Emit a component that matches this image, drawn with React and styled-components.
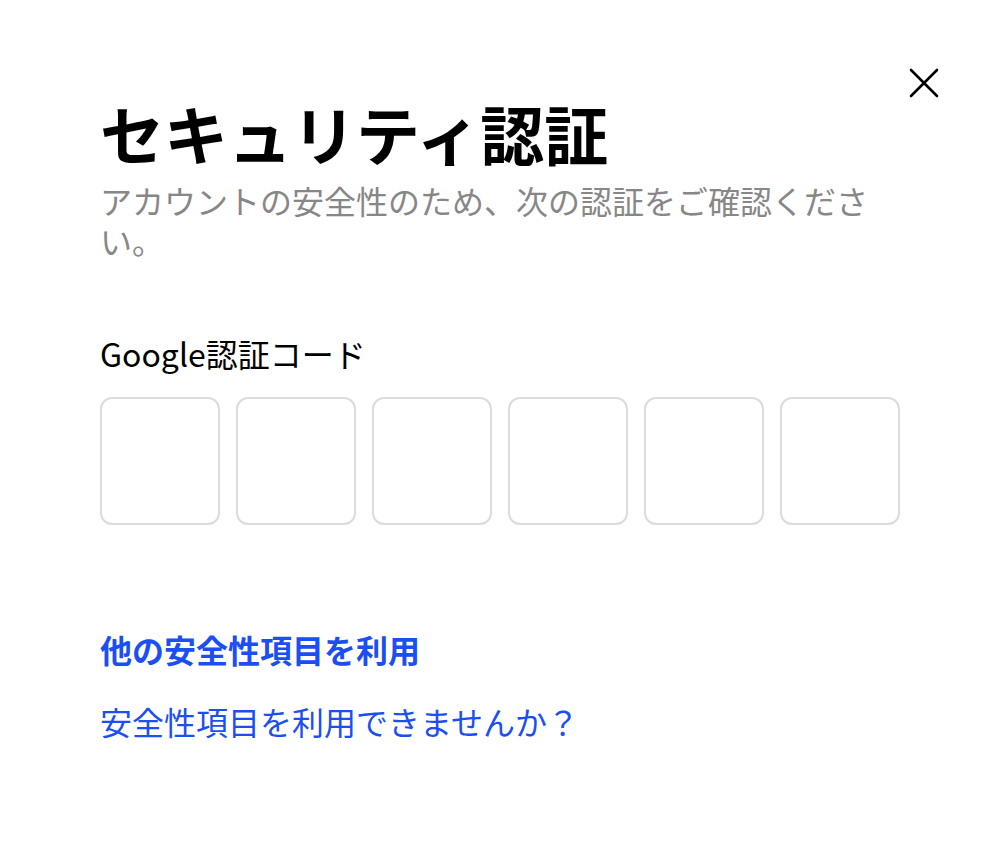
import React from "react";
import styled, { createGlobalStyle } from "styled-components";

const GlobalStyle = createGlobalStyle`
  body {
    margin: 0;
    background: #ffffff;
    font-family: "Noto Sans CJK JP", "Noto Sans", sans-serif;
  }
`;

const Page = styled.div`
  position: relative;
  width: 998px;
  height: 852px;
  box-sizing: border-box;
  padding: 84px 98px 0 100px;
`;

const CloseButton = styled.button`
  position: absolute;
  top: 66px;
  right: 57px;
  width: 34px;
  height: 34px;
  padding: 0;
  border: none;
  background: none;
  display: flex;
  align-items: center;
  justify-content: center;
  cursor: pointer;
`;

const Title = styled.h1`
  margin: 0;
  font-size: 64px;
  line-height: 96px;
  font-weight: 700;
  color: #000;
`;

const Subtitle = styled.p`
  margin: 0;
  font-size: 32px;
  line-height: 40px;
  color: #878787;
  width: 780px;
`;

const Label = styled.div`
  margin-top: 73px;
  font-size: 32px;
  line-height: 40px;
  color: #000;
`;

const CodeRow = styled.div`
  margin-top: 24px;
  display: grid;
  grid-template-columns: repeat(6, 120px);
  gap: 16px;
`;

const CodeBox = styled.input`
  box-sizing: border-box;
  width: 120px;
  height: 128px;
  border: 2px solid #dcdcdc;
  border-radius: 12px;
  background: #fff;
  outline: none;
  text-align: center;
  font-size: 40px;
  font-family: inherit;
`;

const LinkList = styled.div`
  margin-top: 101px;
  display: flex;
  flex-direction: column;
  gap: 26px;
`;

const TextLink = styled.a`
  font-size: 32px;
  line-height: 46px;
  color: #1b4ef3;
  font-weight: ${(p) => (p.$strong ? 700 : 400)};
  text-decoration: none;
  cursor: pointer;
`;

const CloseIcon = () => (
    <svg width="32" height="32" viewBox="0 0 32 32">
        <path d="M3 3 L29 29 M29 3 L3 29" stroke="#000" strokeWidth="2.6" strokeLinecap="round" />
    </svg>
);

export default function App() {
    return (
        <React.Fragment>
            <GlobalStyle />
            <Page>
                <CloseButton aria-label="close">
                    <CloseIcon />
                </CloseButton>
                <Title>セキュリティ認証</Title>
                <Subtitle>アカウントの安全性のため、次の認証をご確認ください。</Subtitle>
                <Label>Google認証コード</Label>
                <CodeRow>
                    {[0, 1, 2, 3, 4, 5].map((i) => (
                        <CodeBox key={i} maxLength={1} />
                    ))}
                </CodeRow>
                <LinkList>
                    <TextLink $strong>他の安全性項目を利用</TextLink>
                    <TextLink>安全性項目を利用できませんか？</TextLink>
                </LinkList>
            </Page>
        </React.Fragment>
    );
}
